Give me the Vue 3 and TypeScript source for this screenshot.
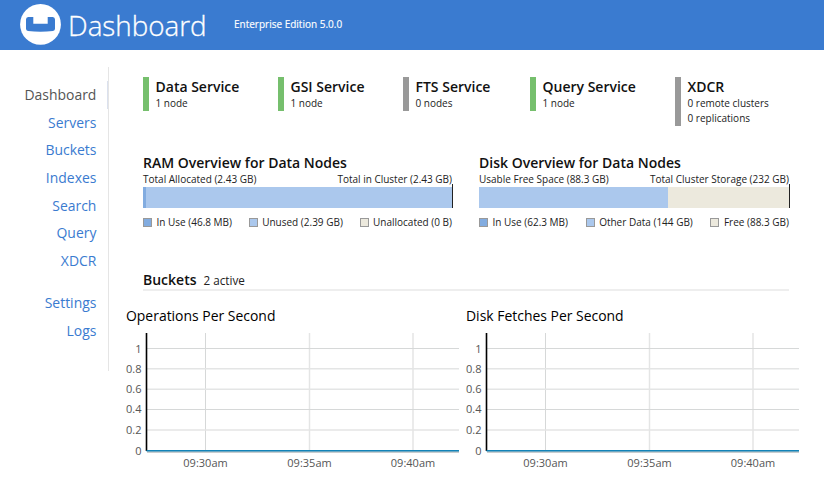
<script setup lang="ts">
interface Service { name: string; lines: string[]; up: boolean; width: number }
interface Legend { label: string; kind: string }
interface Overview { title: string; left: string; right: string; segments: { kind: string; width: number }[]; legend: Legend[] }

const mainNav: string[] = ['Dashboard', 'Servers', 'Buckets', 'Indexes', 'Search', 'Query', 'XDCR']
const extraNav: string[] = ['Settings', 'Logs']

const services: Service[] = [
  { name: 'Data Service', lines: ['1 node'], up: true, width: 135 },
  { name: 'GSI Service', lines: ['1 node'], up: true, width: 125 },
  { name: 'FTS Service', lines: ['0 nodes'], up: false, width: 127 },
  { name: 'Query Service', lines: ['1 node'], up: true, width: 145 },
  { name: 'XDCR', lines: ['0 remote clusters', '0 replications'], up: false, width: 114 },
]

const overviews: Overview[] = [
  {
    title: 'RAM Overview for Data Nodes',
    left: 'Total Allocated (2.43 GB)',
    right: 'Total in Cluster (2.43 GB)',
    segments: [{ kind: 'used', width: 3 }, { kind: 'other', width: 306 }],
    legend: [
      { label: 'In Use (46.8 MB)', kind: 'used' },
      { label: 'Unused (2.39 GB)', kind: 'other' },
      { label: 'Unallocated (0 B)', kind: 'free' },
    ],
  },
  {
    title: 'Disk Overview for Data Nodes',
    left: 'Usable Free Space (88.3 GB)',
    right: 'Total Cluster Storage (232 GB)',
    segments: [{ kind: 'other', width: 189 }, { kind: 'free', width: 121 }],
    legend: [
      { label: 'In Use (62.3 MB)', kind: 'used' },
      { label: 'Other Data (144 GB)', kind: 'other' },
      { label: 'Free (88.3 GB)', kind: 'free' },
    ],
  },
]

const charts: string[] = ['Operations Per Second', 'Disk Fetches Per Second']
const yTicks = [
  { label: '1', y: 18.5, soft: false },
  { label: '0.8', y: 38.8, soft: true },
  { label: '0.6', y: 59.2, soft: true },
  { label: '0.4', y: 79.5, soft: false },
  { label: '0.2', y: 100, soft: true },
]
const xTicks = [
  { label: '09:30am', x: 85.5, soft: false },
  { label: '09:35am', x: 189.5, soft: true },
  { label: '09:40am', x: 293, soft: true },
]
</script>

<template>
  <div class="page">
    <header class="header">
      <svg class="logo" width="41" height="41" viewBox="0 0 41 41">
        <circle cx="20.5" cy="20.4" r="20.4" fill="#fff" />
        <path d="M8.200 13H13.300V19.700H27.700V13H32.800Q35 13.300 35 15.600V24.800Q35 26.600 33 26.900Q20.500 28.400 8 26.900Q6 26.600 6 24.800V15.600Q6 13.300 8.200 13Z" fill="#3a7bd0" />
      </svg>
      <h1 class="title">Dashboard</h1>
      <span class="edition">Enterprise Edition 5.0.0</span>
    </header>
    <div class="body">
      <nav class="sidebar">
        <a v-for="(item, i) in mainNav" :key="item" class="link" :class="{ active: i === 0 }">{{ item }}</a>
        <div class="gap"></div>
        <a v-for="item in extraNav" :key="item" class="link">{{ item }}</a>
      </nav>
      <main class="main">
        <section class="services">
          <div v-for="s in services" :key="s.name" class="slot" :style="{ width: s.width + 'px' }">
            <div class="service" :class="{ up: s.up }">
              <h2 class="heading">{{ s.name }}</h2>
              <p v-for="l in s.lines" :key="l" class="count">{{ l }}</p>
            </div>
          </div>
        </section>
        <section class="overviews">
          <div v-for="o in overviews" :key="o.title" class="overview">
            <h2 class="heading">{{ o.title }}</h2>
            <div class="totals"><span>{{ o.left }}</span><span>{{ o.right }}</span></div>
            <div class="meter">
              <div v-for="g in o.segments" :key="g.kind" class="segment" :class="g.kind" :style="{ width: g.width + 'px' }"></div>
            </div>
            <div class="legend">
              <span v-for="l in o.legend" :key="l.label" class="entry"><i class="swatch" :class="l.kind"></i>{{ l.label }}</span>
            </div>
          </div>
        </section>
        <div class="buckets"><h2 class="heading">Buckets</h2><span class="active-count">2 active</span></div>
        <section class="charts">
          <div v-for="c in charts" :key="c" class="chart">
            <h3 class="chart-title">{{ c }}</h3>
            <svg class="plot" width="340" height="150" viewBox="0 0 340 150">
              <line v-for="t in xTicks" :key="t.label" :x1="t.x" :x2="t.x" y1="3" y2="120" class="grid" :class="{ soft: t.soft }" />
              <line v-for="t in yTicks" :key="t.label" x1="27" x2="339" :y1="t.y" :y2="t.y" class="grid" :class="{ soft: t.soft }" />
              <rect x="27" y="121" width="312" height="2" fill="#c9cdcf" />
              <rect x="25.700" y="3" width="1.600" height="118" fill="#000" />
              <rect x="26.500" y="120" width="312.500" height="1.500" fill="#1283b8" />
              <text v-for="t in yTicks" :key="'y' + t.label" x="21.500" :y="t.label === '0.4' ? t.y + 3.4 : t.y + 4" class="tick end">{{ t.label }}</text>
              <text x="21.500" y="125" class="tick end">0</text>
              <text v-for="t in xTicks" :key="'x' + t.label" :x="t.x" y="137" class="tick mid">{{ t.label }}</text>
            </svg>
          </div>
        </section>
      </main>
    </div>
  </div>
</template>

<style>
body { margin: 0; background: #fff; }
</style>

<style scoped>
.page { width: 825px; height: 493px; overflow: hidden; background: #fff; font-family: "Open Sans", "Noto Sans", sans-serif; color: #222; }
h1, h2, h3, p { margin: 0; }
.header { box-sizing: border-box; width: 824px; height: 50px; background: #3a7bd0; display: flex; align-items: center; padding-left: 20px; color: #fff; white-space: nowrap; }
.logo { flex: none; margin-top: -1px; }
.title { width: 139px; margin-left: 7px; font-size: 27.8px; line-height: 38px; font-weight: 300; -webkit-text-stroke: 0.3px #fff; }
.edition { margin-left: 27px; margin-top: -2px; font-size: 10px; -webkit-text-stroke: 0.15px #fff; }
.body { display: flex; align-items: flex-start; }
.sidebar { box-sizing: border-box; width: 109px; height: 304px; margin-top: 17px; padding-top: 14px; border-right: 1px solid #e5e5e5; display: flex; flex-direction: column; }
.link { box-sizing: border-box; height: 27.7px; line-height: 27px; padding-right: 11.6px; text-align: right; font-size: 13.95px; color: #3a7bd0; }
.link.active { color: #555; border-right: 1px solid #dbe1ee; padding-right: 10.6px; line-height: 27.7px; }
.gap { height: 14px; }
.main { flex: none; width: 716px; }
.services { box-sizing: border-box; display: flex; height: 103px; padding: 27px 0 0 34px; align-items: flex-start; }
.slot { flex: none; display: flex; }
.service { border-left: 6px solid #999; padding-left: 6.5px; padding-top: 1px; white-space: nowrap; }
.service.up { border-left-color: #76bf6d; }
.heading { font-size: 14px; line-height: 18px; font-weight: 600; color: #111; white-space: nowrap; }
.count { font-size: 10px; line-height: 15px; }
.overviews { display: flex; gap: 26px; padding: 1px 0 0 34px; }
.overview { width: 310px; }
.overview + .overview { width: 311px; }
.totals { display: flex; justify-content: space-between; padding-right: 1px; font-size: 10px; line-height: 14px; white-space: nowrap; }
.meter { box-sizing: border-box; display: flex; align-items: flex-end; height: 24px; margin-top: -2px; border-right: 1px solid #222; }
.segment { height: 21px; }
.used { background: #82ace0; }
.other { background: #abc8ed; }
.free { background: #ece9dd; }
.legend { display: flex; justify-content: space-between; margin-top: 7px; padding-right: 1px; font-size: 10px; line-height: 14px; white-space: nowrap; }
.entry { display: flex; align-items: center; }
.swatch { box-sizing: border-box; width: 9px; height: 9px; border: 1px solid #999; margin-right: 4.5px; }
.buckets { box-sizing: border-box; display: flex; align-items: baseline; gap: 7px; height: 20px; width: 646px; margin: 42px 0 0 34px; border-bottom: 2px solid #eee; }
.active-count { font-size: 11.7px; }
.charts { display: flex; padding-left: 11px; padding-top: 14px; }
.chart { width: 340px; }
.chart-title { padding-left: 6px; font-size: 13.95px; line-height: 22px; font-weight: 400; color: #000; white-space: nowrap; }
.plot { display: block; margin-top: 3px; }
.grid { stroke: #d6d8d8; stroke-width: 1; }
.grid.soft { stroke: #e4e5e5; stroke-width: 1.500; }
.tick { font-size: 11px; fill: #555; }
.end { text-anchor: end; }
.mid { text-anchor: middle; }
</style>
